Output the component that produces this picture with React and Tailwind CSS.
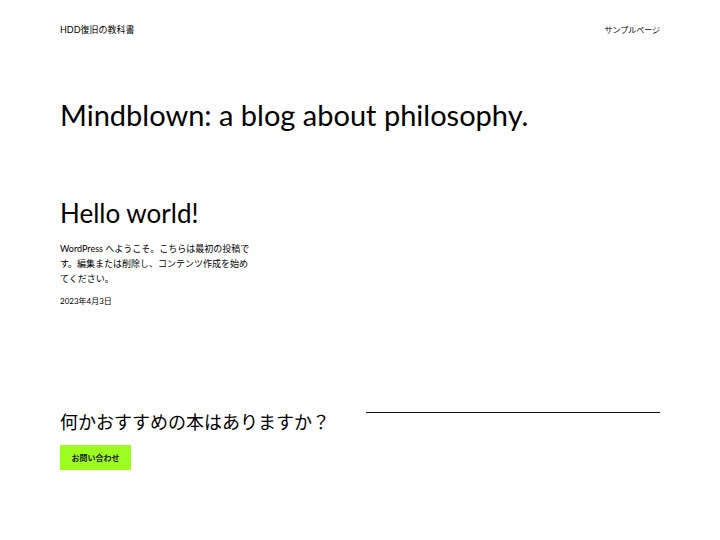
import React from 'react';

const latin = { fontFamily: 'Lato, "Noto Sans CJK JP", sans-serif' };

export default function App() {
    return (
        <div className="min-h-[540px] w-[720px] bg-white text-black" style={latin}>
            <header className="flex items-center justify-between px-[60px] pt-[23px]">
                <a className="text-[9px] leading-[14px]">HDD復旧の教科書</a>
                <nav className="text-[8px] leading-[14px]">サンプルページ</nav>
            </header>

            <main className="px-[60px]">
                <h1 className="mt-[58px] text-[29px] leading-[40px] font-normal">
                    Mindblown: a blog about philosophy.
                </h1>

                <article className="mt-[62px] w-[194px]">
                    <h2 className="text-[26px] leading-[32px]">Hello world!</h2>
                    <p className="mt-[12px] text-[9px] leading-[15px]">
                        WordPress へようこそ。こちらは最初の投稿です。編集または削除し、コンテンツ作成を始めてください。
                    </p>
                    <p className="mt-[9px] text-[8px] leading-[12px]">2023年4月3日</p>
                </article>

                <section className="mt-[102px] flex justify-between">
                    <div>
                        <h3 className="mt-[1px] text-[18px] leading-[24px]">何かおすすめの本はありますか？</h3>
                        <button className="mt-[11px] h-[25px] w-[71px] bg-[#9dff20] text-[8px] font-bold text-[#1a1a1a]">
                            お問い合わせ
                        </button>
                    </div>
                    <div className="mt-[3px] w-[294px] self-start border-t-[1.5px] border-[#111]" />
                </section>
            </main>
        </div>
    );
}
